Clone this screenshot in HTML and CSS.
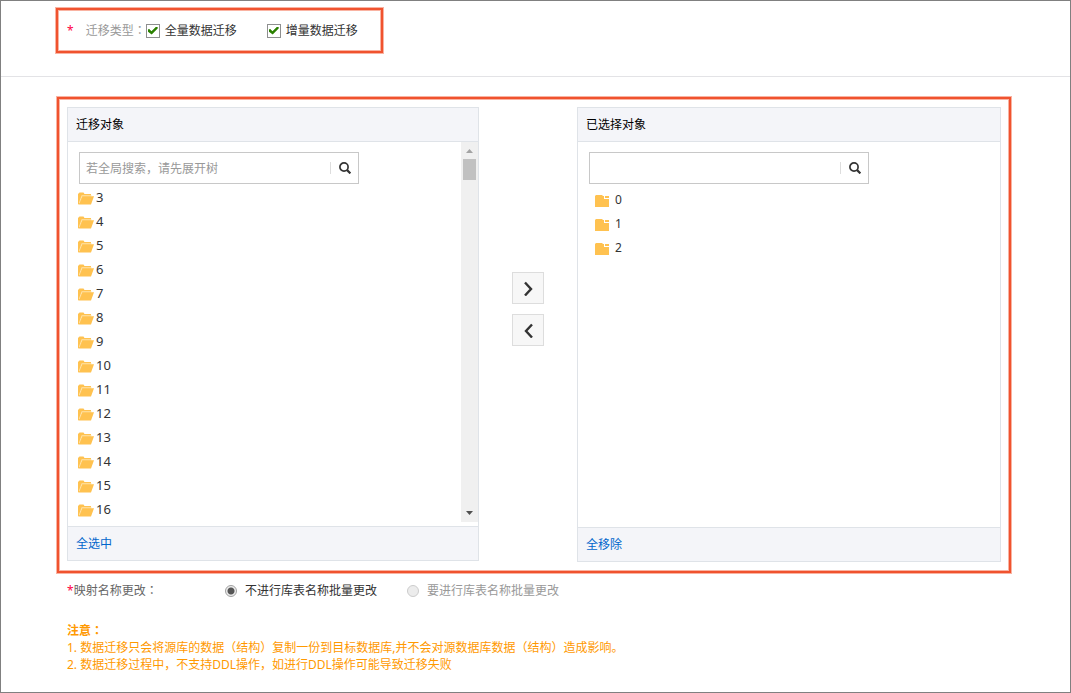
FILE: index.html
```
<!DOCTYPE html>
<html lang="zh-CN">
<head>
<meta charset="utf-8">
<title>数据迁移</title>
<link rel="stylesheet" href="styles.css">
</head>
<body>
<svg class="sprite" aria-hidden="true">
  <symbol id="folder-open" viewBox="0 0 16 13">
    <path fill="#ffc250" d="M0 12V2L1.500 .500H5.500L6.500 2H13V4.500H5L1.500 12z"/>
    <path fill="#ffe3aa" d="M3.600 3.300H13.500V4.500H4.500L1.800 11H.8z"/>
    <path fill="#ffc250" d="M4.500 4.300H16L13 12.500H.3V11.500H1.500z"/>
  </symbol>
  <symbol id="folder" viewBox="0 0 14 12">
    <path fill="#ffc250" d="M0 1L1 0H7L8 1H9V4H14V12H0z"/>
    <path fill="#ffc250" d="M10 1H14V3H10z"/>
  </symbol>
  <symbol id="search" viewBox="0 0 12 12">
    <circle cx="5" cy="5" r="4.100" fill="none" stroke="#333" stroke-width="1.700"/>
    <path d="M7.900 7.900L11.400 11.400" stroke="#333" stroke-width="2.200"/>
  </symbol>
</svg>
<main class="page">
  <section class="top">
    <div class="mark types">
      <span class="star">*</span>
      <span class="types-label">迁移类型<span class="mid" lang="zh-TW">：</span></span>
      <label class="choice"><input class="check" type="checkbox" checked>全量数据迁移</label>
      <label class="choice choice-next"><input class="check" type="checkbox" checked>增量数据迁移</label>
    </div>
  </section>
  <section class="mark transfer">
    <div class="panel panel-source">
      <h2 class="panel-head">迁移对象</h2>
      <div class="panel-body">
        <div class="content">
          <div class="search">
            <input class="search-input" type="text" aria-label="搜索迁移对象" placeholder="若全局搜索，请先展开树">
            <button class="search-btn" type="button" aria-label="搜索"><svg class="search-icon"><use href="#search"/></svg></button>
          </div>
          <ul class="tree">
            <li><svg class="open-icon"><use href="#folder-open"/></svg>3</li>
            <li><svg class="open-icon"><use href="#folder-open"/></svg>4</li>
            <li><svg class="open-icon"><use href="#folder-open"/></svg>5</li>
            <li><svg class="open-icon"><use href="#folder-open"/></svg>6</li>
            <li><svg class="open-icon"><use href="#folder-open"/></svg>7</li>
            <li><svg class="open-icon"><use href="#folder-open"/></svg>8</li>
            <li><svg class="open-icon"><use href="#folder-open"/></svg>9</li>
            <li><svg class="open-icon"><use href="#folder-open"/></svg>10</li>
            <li><svg class="open-icon"><use href="#folder-open"/></svg>11</li>
            <li><svg class="open-icon"><use href="#folder-open"/></svg>12</li>
            <li><svg class="open-icon"><use href="#folder-open"/></svg>13</li>
            <li><svg class="open-icon"><use href="#folder-open"/></svg>14</li>
            <li><svg class="open-icon"><use href="#folder-open"/></svg>15</li>
            <li><svg class="open-icon"><use href="#folder-open"/></svg>16</li>
          </ul>
        </div>
        <div class="scrollbar" aria-hidden="true">
          <svg class="arrow" viewBox="0 0 17 17"><path d="M5 11L8.500 7L12 11z" fill="#a3a3a3"/></svg>
          <div class="thumb"></div>
          <svg class="arrow arrow-down" viewBox="0 0 17 17"><path d="M5 6L8.500 10L12 6z" fill="#505050"/></svg>
        </div>
      </div>
      <div class="panel-foot"><a class="link" href="#">全选中</a></div>
    </div>
    <div class="moves">
      <button class="move" type="button" aria-label="添加"><svg class="chevron" viewBox="0 0 16 16"><path d="M5 2.500L11 9L5 15.500"/></svg></button>
      <button class="move" type="button" aria-label="移除"><svg class="chevron" viewBox="0 0 16 16"><path d="M12 2.500L6 9L12 15.500"/></svg></button>
    </div>
    <div class="panel panel-chosen">
      <h2 class="panel-head">已选择对象</h2>
      <div class="panel-body">
        <div class="content">
          <div class="search">
            <input class="search-input" type="text" aria-label="搜索已选择对象">
            <button class="search-btn" type="button" aria-label="搜索"><svg class="search-icon"><use href="#search"/></svg></button>
          </div>
          <ul class="tree tree-chosen">
            <li><svg class="folder-icon"><use href="#folder"/></svg>0</li>
            <li><svg class="folder-icon"><use href="#folder"/></svg>1</li>
            <li><svg class="folder-icon"><use href="#folder"/></svg>2</li>
          </ul>
        </div>
      </div>
      <div class="panel-foot"><a class="link" href="#">全移除</a></div>
    </div>
  </section>
  <section class="rename">
    <span class="rename-label"><span class="star">*</span>映射名称更改<span class="mid" lang="zh-TW">：</span></span>
    <label class="option"><input class="radio" type="radio" name="rename" checked>不进行库表名称批量更改</label>
    <label class="option option-off"><input class="radio" type="radio" name="rename" disabled>要进行库表名称批量更改</label>
  </section>
  <section class="notes">
    <strong>注意<span class="mid" lang="zh-TW">：</span></strong>
    <p>1. 数据迁移只会将源库的数据（结构）复制一份到目标数据库,并不会对源数据库数据（结构）造成影响。</p>
    <p>2. 数据迁移过程中，不支持DDL操作，如进行DDL操作可能导致迁移失败</p>
  </section>
</main>
</body>
</html>
```

FILE: styles.css
```
* { box-sizing: border-box; }
body {
  margin: 0;
  background: #fff;
  color: #333;
  font: 12px/16px "Noto Sans", "Noto Sans CJK SC", sans-serif;
}
.sprite { display: none; }
.mid { font-family: "Noto Sans CJK TC", sans-serif; line-height: 1; }
.page { min-height: 100vh; border: 1px solid #808080; }
.top { padding: 7px 55px 23px; border-bottom: 1px solid #e3e3e6; }
.mark {
  border: 2px solid #f0532f;
  box-shadow: 0 0 0 1px #f9b3a2, inset 0 0 0 1px #f9b3a2;
}
.types {
  display: flex;
  align-items: center;
  width: max-content;
  height: 45px;
  padding: 0 23px 0 9px;
}
.star { color: #f04; }
.types-label { margin-left: 12px; color: #999; }
.choice { display: flex; align-items: center; gap: 5px; }
.choice-next { margin-left: 30px; }
.check {
  appearance: none;
  width: 14px;
  height: 14px;
  margin: 0;
  border: 1px solid #8e8f8f;
  background: #fff;
  display: grid;
  place-items: center;
}
.check:checked::before {
  content: "";
  width: 10px;
  height: 8px;
  background: #2a8000;
  clip-path: polygon(0 38%, 16% 30%, 38% 60%, 86% 0, 100% 0, 100% 24%, 40% 100%, 0 62%);
}
.transfer {
  display: flex;
  align-items: flex-start;
  margin: 20px 59px 0 56px;
  padding: 8px 8px 9px;
}
.panel { border: 1px solid #dfe3e8; min-width: 0; }
.panel-source { flex: 412 1 0; }
.panel-chosen { flex: 424 1 0; }
.panel-head, .panel-foot { padding: 0 8px; background: #f4f5f9; }
.panel-head {
  margin: 0;
  border-bottom: 1px solid #dfe3e8;
  color: #000;
  font-size: 12px;
  font-weight: 400;
  line-height: 33px;
}
.panel-foot { border-top: 1px solid #dfe3e8; line-height: 33px; }
.panel-body { display: flex; min-height: 384px; }
.panel-chosen .panel-body { min-height: 385px; }
.content { flex: 1; min-width: 0; padding: 10px 11px 0; }
.search {
  display: flex;
  align-items: center;
  max-width: 280px;
  height: 32px;
  border: 1px solid #c8c8c8;
}
.search-input {
  flex: 1;
  min-width: 0;
  height: 30px;
  padding: 0 6px 2px;
  border: 0;
  outline: 0;
  background: none;
  color: #333;
  font: 12px/16px "Noto Sans CJK SC", sans-serif;
}
.search-input::placeholder { color: #999; opacity: 1; }
.search-btn {
  display: flex;
  width: 28px;
  height: 12px;
  margin: 0;
  padding: 0 7px 0 8px;
  border: 0;
  border-left: 1px solid #ddd;
  background: none;
}
.search-icon { width: 12px; height: 12px; }
.tree { margin: 1px 0 0; padding: 0; list-style: none; font-size: 13px; }
.tree li { display: flex; align-items: center; height: 24px; }
.open-icon { width: 16px; height: 13px; margin: 2px 2px 0 -1px; }
.tree-chosen { margin-top: 4px; padding-left: 6px; font-size: 12px; }
.folder-icon { width: 14px; height: 12px; margin: 2px 6px 0 0; }
.scrollbar {
  display: flex;
  flex-direction: column;
  width: 17px;
  margin-bottom: 4px;
  background: #f0f0f0;
}
.arrow { width: 17px; height: 17px; }
.arrow-down { margin-top: auto; }
.thumb { height: 21px; margin: 0 2px; background: #c1c1c1; }
.link { color: #06c; text-decoration: none; }
.moves {
  display: flex;
  flex-direction: column;
  gap: 10px;
  margin: 165px 33px 0;
}
.move {
  display: grid;
  place-items: center;
  width: 32px;
  height: 32px;
  padding: 0;
  border: 1px solid #ddd;
  background: #f7f7f7;
}
.chevron { width: 16px; height: 16px; fill: none; stroke: #333; stroke-width: 2.4; }
.rename { display: flex; align-items: center; margin: 10px 66px 0; }
.rename-label { width: 158px; color: #666; }
.option { display: flex; align-items: center; gap: 8px; }
.option-off { margin-left: 30px; color: #999; }
.radio {
  appearance: none;
  width: 12px;
  height: 12px;
  margin: 0;
  border: 1px solid #a0a0a0;
  border-radius: 50%;
  background: #ececec;
}
.radio:checked { background: radial-gradient(circle, #555 0 3px, #ececec 4px); }
.radio:disabled { border-color: #ccc; }
.notes { margin: 23px 66px 0; color: #f90; line-height: 17px; }
.notes p { margin: 0; }
```
